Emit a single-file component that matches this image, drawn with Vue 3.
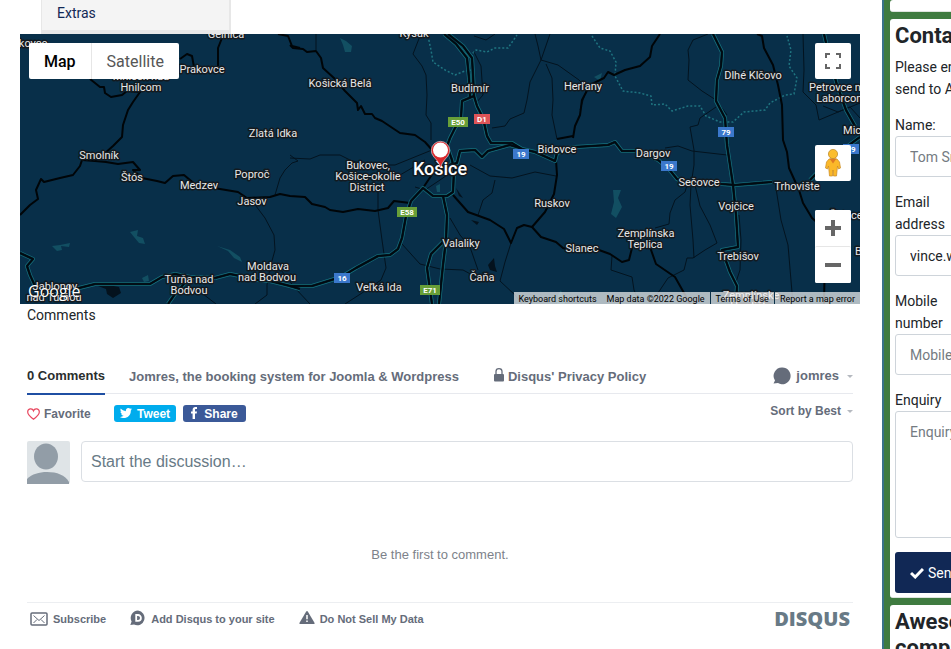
<script setup>
const places = [
  { x: 30, y: 47, t: 'okovce' },
  { x: 226, y: 38, t: 'Gelnica' },
  { x: 414, y: 37, t: 'Kysak' },
  { x: 202, y: 73, t: 'Prakovce' },
  { x: 141, y: 80, t: 'Mníšek nad' },
  { x: 141, y: 91, t: 'Hnilcom' },
  { x: 340, y: 87, t: 'Košická Belá' },
  { x: 470, y: 92, t: 'Budimír' },
  { x: 583, y: 90, t: 'Herľany' },
  { x: 753, y: 79, t: 'Dlhé Klčovo' },
  { x: 841, y: 91, t: 'Petrovce nad' },
  { x: 841, y: 102, t: 'Laborcom' },
  { x: 871, y: 134, t: 'Michalovce' },
  { x: 273, y: 137, t: 'Zlatá Idka' },
  { x: 99, y: 159, t: 'Smolník' },
  { x: 132, y: 181, t: 'Štós' },
  { x: 199, y: 189, t: 'Medzev' },
  { x: 252, y: 178, t: 'Poproč' },
  { x: 252, y: 205, t: 'Jasov' },
  { x: 368, y: 169, t: 'Bukovec,' },
  { x: 368, y: 180, t: 'Košice-okolie' },
  { x: 367, y: 191, t: 'District' },
  { x: 557, y: 153, t: 'Bidovce' },
  { x: 653, y: 157, t: 'Dargov' },
  { x: 699, y: 186, t: 'Sečovce' },
  { x: 797, y: 190, t: 'Trhovište' },
  { x: 736, y: 210, t: 'Vojčice' },
  { x: 552, y: 207, t: 'Ruskov' },
  { x: 646, y: 237, t: 'Zemplínska' },
  { x: 645, y: 248, t: 'Teplica' },
  { x: 461, y: 247, t: 'Valaliky' },
  { x: 582, y: 252, t: 'Slanec' },
  { x: 738, y: 260, t: 'Trebišov' },
  { x: 846, y: 219, t: 'Žbince' },
  { x: 873, y: 255, t: 'Budkov' },
  { x: 482, y: 281, t: 'Čaňa' },
  { x: 379, y: 291, t: 'Veľká Ida' },
  { x: 268, y: 270, t: 'Moldava' },
  { x: 267, y: 281, t: 'nad Bodvou' },
  { x: 189, y: 283, t: 'Turňa nad' },
  { x: 189, y: 294, t: 'Bodvou' },
  { x: 55, y: 290, t: 'Jablonov' },
  { x: 54, y: 301, t: 'nad Turňou' },
  { x: 751, y: 299, t: 'Zemplínske' },
  { x: 751, y: 310, t: 'Hradište' },
]

const shields = [
  { x: 458, y: 122, t: 'E50', c: '#689f38' },
  { x: 482, y: 119, t: 'D1', c: '#dc5458' },
  { x: 407, y: 212, t: 'E58', c: '#689f38' },
  { x: 430, y: 290, t: 'E71', c: '#689f38' },
  { x: 521, y: 154, t: '19', c: '#3b78cc' },
  { x: 669, y: 166, t: '19', c: '#3b78cc' },
  { x: 726, y: 132, t: '79', c: '#3b78cc' },
  { x: 342, y: 278, t: '16', c: '#3b78cc' },
  { x: 851, y: 149, t: '19', c: '#3b78cc' },
]

const highways = [
  'M448 34L463 46L472 58L473 75L474 96L462 101L461 118L455 128L450 138L447 146L452 160L454 170L453 192L447 196L433 196L423 188L411 201L406 216L402 238L398 249L390 255L378 256L356 268L341 277L312 286L290 286L270 281L258 280L240 276L230 274L215 278',
  'M444 34L456 44L467 58L469 78L470 98',
  'M474 96L477 106L483 118L487 136L491 143L512 143L522 149L535 152L555 161L557 153L575 147L608 145L615 142L622 151L640 151L658 160L668 168L677 179L690 183L722 184L735 185L772 182',
  'M449 165L457 163L460 151L475 150L482 157L488 151L510 145L520 148',
  'M443 196L447 215L446 240L443 265L439 304',
  'M443 242L431 254L427 268L432 304',
  'M215 278L190 277L175 274L162 277L150 284L95 284L75 289L60 292L35 286L30 275L27 266L33 259L20 253',
  'M190 277L175 294L168 304',
  'M713 34L722 52L721 66L717 80L716 101L725 118L727 145L730 165L733 185L736 215L738 247L722 250L730 272L737 286L736 304',
  'M824 34L830 60L837 85L846 110L855 126',
  'M810 180L825 165L845 148L860 137',
  'M290 286L300 289',
]
const thick = [
  'M290 45L293 48L303 49L307 52L316 51L321 58L323 68L335 79L345 91L357 103L358 110L361 106L365 114L372 114L375 118L382 121L400 133L415 135L425 142L433 151L440 166',
  'M278 34L288 36L292 46L300 48',
  'M90 79L100 87L104 87L105 93L111 97L122 95L127 91L140 92L133 102L128 110L123 125L122 137L113 146L104 154',
  'M180 59L187 54L192 56L194 67',
  'M222 38L218 48L218 66',
  'M82 160L80 166L73 175L60 178L44 182L41 179L36 190L38 199L30 205L20 215',
  'M82 160L95 161L106 162L118 164L133 162L140 170L133 170L142 178L157 181L165 183L173 176L184 175L196 185L220 189L238 192L247 198L270 197L280 194L290 196L305 197L312 204L325 207L330 210L343 212L358 209L375 211L388 208L394 201L410 203L423 188L435 170',
  'M453 195L468 212L490 220L504 229L511 243L517 228L524 225L532 227L545 212L554 194L557 175L556 160',
  'M532 227L541 237L556 242L563 248L578 252',
  'M599 250L610 254L622 262L629 260L632 248L634 237',
  'M650 247L656 264L675 277L688 300L690 304',
  'M573 138L575 126L580 115L582 100L590 85L604 78L608 72L614 75L625 70L640 66L650 57L652 46L660 34',
  'M557 139L573 136',
  'M757 34L762 36L764 48L773 65L778 85L782 105L783 140L787 152L789 168L799 190L803 203L812 218L820 225L825 250L824 304',
]
const thin = [
  'M420 36L413 54L422 66L426 75L427 95L426 115L431 123L431 140',
  'M535 34L538 46L541 60L530 82L527 100L524 113L510 119L505 126L492 128',
  'M550 34L541 60L558 65L579 80L587 88L580 110',
  'M546 64L552 78L553 100L552 115L557 139',
  'M474 52L481 66L483 95L476 103',
  'M474 36L486 40L495 34',
  'M708 34L693 40L688 50L689 60L688 80L702 91L716 100L727 115',
  'M716 107L700 118L698 125L690 127L694 150L694 165L691 185L690 205L693 240L694 258',
  'M665 148L678 146L692 151L727 155',
  'M695 185L700 206L710 225L717 243L705 250L693 258L687 258L684 270L668 278L660 290L650 304',
  'M687 185L685 192L675 200L670 213L669 224L655 228',
  'M612 256L611 270L632 277L634 290L640 304',
  'M803 34L804 70L803 92L816 105L819 120L850 107L860 118',
  'M775 182L781 220L788 245L793 304',
  'M823 106L838 112L860 103',
  'M253 202L265 218L274 235L275 250L270 268L267 285L267 295L255 304',
  'M275 195L280 178L285 170L292 163L298 161L290 155M290 158L310 159L320 155L340 155L350 160L365 165L395 165L432 150',
  'M281 270L295 288L310 304',
  'M378 190L378 210L382 240L386 268L381 280L362 293L345 304',
  'M402 244L420 264L440 269L463 270L476 277',
  'M450 218L460 235L470 247L478 270',
  'M511 243L505 262L500 281L515 295L522 304',
  'M470 165L490 176L512 178L535 172L556 176M495 180L492 193L483 200L478 215',
  'M316 34L316 50M400 175L412 168L425 160M415 187L425 190L440 180L453 171',
  'M739 215L741 240L740 270L735 285',
  'M203 294L216 304',
]
const dotted = [
  'M428 36L431 50L433 62L445 70L455 75L465 71L473 70L472 54L476 50L487 52L495 48L508 48L517 35',
  'M592 36L600 48L610 51L616 62L615 76L623 91L640 93L651 96L652 105L665 104L672 111L688 106L700 106L706 116L720 122L733 122L744 112L765 110L770 103L785 95L794 94L797 78L789 66L791 50L787 36',
]
const lakes = [
  'M340 38L346 41L352 46L351 52L345 52L343 45Z',
  'M613 190H621L618 198L622 207L616 218L611 214L614 202Z',
  'M52 246L60 245L70 243L69 247L61 246L62 250L57 251Z',
  'M130 232L138 230L137 236L143 238L145 244L139 243L134 237Z',
  'M217 246L230 250L240 257L242 262L234 258L228 251Z',
  'M142 278L148 275L149 281L144 282Z',
  'M594 77L602 73L600 81Z',
  'M436 186L440 184L440 192L437 192Z',
  'M558 295L561 290L565 304H557Z',
]
const quarries = [
  'M98 286L108 285L119 287L121 293L113 298L107 294L106 289Z',
  'M488 265L494 258L495 266L497 272L490 270Z',
  'M471 220L479 222L477 225Z',
  'M456 188L463 198L459 196Z',
]
</script>

<template>
  <div class="page">
    <main class="main">
      <nav class="dropdown"><a href="#">Extras</a></nav>

      <section class="map" aria-label="Map">
        <svg class="canvas" viewBox="20 34 840 270" preserveAspectRatio="xMidYMid slice">
          <rect x="20" y="34" width="840" height="270" fill="#082f49" />
          <g fill="#124f62"><path v-for="d in lakes" :key="d" :d="d" /></g>
          <g fill="#04121d"><path v-for="d in quarries" :key="d" :d="d" /></g>
          <g class="line" stroke="#1f7480" stroke-width="1.500" stroke-dasharray="2 2"><path v-for="d in dotted" :key="d" :d="d" /></g>
          <g class="line" stroke="#03131f" stroke-width="1"><path v-for="d in thin" :key="d" :d="d" /></g>
          <g class="line" stroke="#000508" stroke-width="2"><path v-for="d in thick" :key="d" :d="d" /></g>
          <g class="line" stroke="#15717d" stroke-width="4"><path v-for="d in highways" :key="d" :d="d" /></g>
          <g class="line" stroke="#041c2b" stroke-width="2.600"><path v-for="d in highways" :key="d" :d="d" /></g>
          <g class="line" stroke="#000a10" stroke-width="1.600"><path v-for="d in highways" :key="d" :d="d" /></g>
          <g v-for="s in shields" :key="s.t + s.x">
            <rect :x="s.x - (s.t.length > 2 ? 10 : 8)" :y="s.y - 5" :width="s.t.length > 2 ? 20 : 16" height="10" :fill="s.c" />
            <text class="shield" :x="s.x" :y="s.y + 3">{{ s.t }}</text>
          </g>
          <text v-for="p in places" :key="p.t" class="place" :x="p.x" :y="p.y">{{ p.t }}</text>
          <text class="place city" x="440" y="175">Košice</text>
          <path d="M440.500 168C439 162 436 159.500 433.500 156.500A9.200 9.200 0 1 1 447.500 156.500C445 159.500 442 162 440.500 168Z" fill="#d8282c" stroke="#fff" stroke-width=".5" />
          <circle cx="440.500" cy="150" r="7.500" fill="#fff" />
        </svg>

        <div class="map-type">
          <button class="on" type="button">Map</button>
          <button type="button">Satellite</button>
        </div>
        <div class="controls">
          <button class="ctl" type="button" aria-label="Toggle fullscreen view">
            <svg width="16" height="16" viewBox="0 0 16 16"><path d="M1 5V1H5M11 1H15V5M15 11V15H11M5 15H1V11" fill="none" stroke="#666" stroke-width="2" /></svg>
          </button>
          <button class="ctl pegman" type="button" aria-label="Street View">
            <svg width="18" height="30" viewBox="0 0 18 30">
              <path d="M5 11L2.500 14L1.500 20L3.500 21L4.500 18L5.500 28H8.500L9 22L9.500 28H12.500L13.500 18L14.500 21L16.500 20L15.500 14L13 11Z" fill="#fbb829" stroke="#c98a22" stroke-width=".7" />
              <path d="M5.500 10.500H12.500L9 15.500Z" fill="#e07a24" />
              <circle cx="9" cy="6" r="4.600" fill="#fbbd2e" stroke="#b98524" stroke-width=".7" />
            </svg>
          </button>
          <div class="zoom">
            <button type="button" aria-label="Zoom in"><svg width="16" height="16" viewBox="0 0 16 16"><path d="M0 8H16M8 0V16" stroke="#666" stroke-width="4" /></svg></button>
            <button type="button" aria-label="Zoom out"><svg width="16" height="16" viewBox="0 0 16 16"><path d="M0 8H16" stroke="#666" stroke-width="4" /></svg></button>
          </div>
        </div>
        <span class="google">Google</span>
        <div class="legal">
          <button type="button">Keyboard shortcuts</button>
          <span>Map data ©2022 Google</span>
          <a href="#">Terms of Use</a>
          <a href="#">Report a map error</a>
        </div>
      </section>

      <section class="comments">
        <h2>Comments</h2>
        <div class="disqus">
          <div class="tabs">
            <a class="tab current" href="#">0 Comments</a>
            <a class="tab site" href="#">Jomres, the booking system for Joomla &amp; Wordpress</a>
            <a class="tab" href="#">
              <svg width="10" height="18" viewBox="0 0 10 18"><rect y="6" width="10" height="7.500" rx="1" fill="#656c7a" /><path d="M2 6V3.500A3 2.800 0 0 1 8 3.500V6" fill="none" stroke="#656c7a" stroke-width="1.300" /></svg>
              Disqus' Privacy Policy
            </a>
            <button class="user" type="button">
              <svg width="18" height="18" viewBox="0 0 18 18"><path d="M9.300 .5A8.200 8.400 0 1 1 5 16L.5 16.500L2 13.500A8.300 8.400 0 0 1 9.300 .5Z" fill="#656c7a" /></svg>
              jomres
              <i class="caret"></i>
            </button>
          </div>

          <div class="actions">
            <button class="favorite" type="button">
              <svg width="13" height="12" viewBox="0 0 13 12"><path d="M6.500 11.200C3 8.600 .7 6.700 .7 4A3 3.100 0 0 1 6.500 2.800A3 3.100 0 0 1 12.300 4C12.300 6.700 10 8.600 6.500 11.200Z" fill="none" stroke="#e8475f" stroke-width="1.200" /></svg>
              Favorite
            </button>
            <button class="share tweet" type="button">
              <svg width="12" height="12" viewBox="0 0 12 12"><path d="M12 1.200L10.800 2.400C11 7 7.500 10 3.800 10C2.400 10 1 9.600 0 8.900C1.300 9 2.600 8.600 3.600 7.800C2.500 7.700 1.600 7 1.300 6.100H2.400C1.200 5.800 .4 4.700 .4 3.600L1.500 3.900C.4 3.100 .1 1.700 .8 .6C2 2.100 3.800 3.100 5.900 3.200C5.500 1.300 6.800 0 8.300 0C9 0 9.700 .3 10.100 .8L11.700 .2L10.700 1.500Z" fill="#fff" /></svg>
              Tweet
            </button>
            <button class="share facebook" type="button">
              <svg width="6" height="14" viewBox="0 0 6 14"><path d="M1.600 12V6.600H0V4.500H1.600V3C1.600 1 2.700 0 4.400 0H6V2.100H4.900C4.200 2.100 4 2.500 4 3.100V4.500H6L5.700 6.600H4V12Z" fill="#fff" /></svg>
              Share
            </button>
            <button class="sort" type="button">Sort by Best <i class="caret"></i></button>
          </div>

          <div class="composer">
            <svg class="avatar" width="43" height="43" viewBox="0 0 43 43"><rect width="43" height="43" rx="2" fill="#dfe4e7" /><ellipse cx="19" cy="15.500" rx="12" ry="13" fill="#929da7" /><path d="M0 38C5 33 12 31 20 31C30 31 38 34 42 41V43H0Z" fill="#929da7" /></svg>
            <input type="text" placeholder="Start the discussion…" aria-label="Start the discussion" />
          </div>

          <p class="empty">Be the first to comment.</p>

          <footer class="foot">
            <a href="#">
              <svg width="18" height="14" viewBox="0 0 18 14"><rect x="1" y="1" width="16" height="12" rx="1" fill="none" stroke="#656c7a" stroke-width="1.500" /><path d="M3.500 3.500L9 8.500L14.500 3.500M3.500 11L7 7.500M14.500 11L11 7.500" fill="none" stroke="#656c7a" /></svg>
              Subscribe
            </a>
            <a href="#">
              <svg width="16" height="18" viewBox="0 0 16 18"><path d="M8 .5A7.300 7.400 0 1 1 4 14.500L.3 15L1.600 11.500A7.300 7.400 0 0 1 8 .5Z" fill="#656c7a" /><path d="M6.200 5H8A2.900 2.900 0 0 1 8 10.800H6.200Z" fill="none" stroke="#fff" stroke-width="1.800" /></svg>
              Add Disqus to your site
            </a>
            <a href="#">
              <svg width="16" height="18" viewBox="0 0 16 18"><path d="M7.200 1.600Q8 .6 8.800 1.600L15.600 13Q15.800 14 15 14H1Q.2 14 .4 13Z" fill="#656c7a" /><path d="M8 5V9.300M8 10.500V12" stroke="#fff" stroke-width="1.500" /></svg>
              Do Not Sell My Data
            </a>
            <a class="brand" href="#">DISQUS</a>
          </footer>
        </div>
      </section>
    </main>

    <aside class="side">
      <div class="card stub"></div>
      <form class="card contact" @submit.prevent>
        <h3>Contact</h3>
        <p>Please enter<br />send to A</p>
        <div class="field">
          <label for="name">Name:</label>
          <input id="name" type="text" placeholder="Tom Smith" />
        </div>
        <div class="field">
          <label for="email">Email<br />address</label>
          <input id="email" type="text" value="vince.w" />
        </div>
        <div class="field">
          <label for="mobile">Mobile<br />number</label>
          <input id="mobile" type="text" placeholder="Mobile" />
        </div>
        <div class="field">
          <label for="enquiry">Enquiry</label>
          <textarea id="enquiry" placeholder="Enquiry"></textarea>
        </div>
        <button class="send" type="submit">
          <svg width="14" height="12" viewBox="0 0 14 12"><path d="M1 6L5.200 10L13 2" fill="none" stroke="#fff" stroke-width="3" /></svg>
          Send
        </button>
      </form>
      <div class="card last"><h3>Awesome<br />company</h3></div>
    </aside>
  </div>
</template>

<style>
body { margin: 0; background: #fff; }
</style>

<style scoped>
* { box-sizing: border-box; }
button { margin: 0; padding: 0; border: 0; background: none; font: inherit; color: inherit; }
a { color: inherit; text-decoration: none; }
svg { display: block; flex: none; }
.page {
  display: grid;
  grid-template-columns: minmax(0, 1fr) 69px;
  height: 100vh;
  overflow: hidden;
  font: 14px/22px Roboto, sans-serif;
  color: #212529;
}
.main { padding: 0 22px 0 20px; }
.dropdown {
  width: 190px;
  height: 34px;
  margin-left: 21px;
  padding: 2px 15px;
  background: #f4f4f4;
  border: solid #e7e7e7;
  border-width: 0 2px 4px 1px;
  color: #112855;
}

.map { position: relative; height: 270px; overflow: hidden; }
.canvas { width: 100%; height: 100%; }
.line { fill: none; stroke-linejoin: round; }
.place {
  font: 11px Roboto, sans-serif;
  fill: #e8e8e8;
  stroke: #131a20;
  stroke-width: 3px;
  stroke-linejoin: round;
  paint-order: stroke;
  text-anchor: middle;
}
.city { font-size: 18px; font-weight: 500; fill: #fff; }
.shield { font: bold 8px Roboto, sans-serif; fill: #fff; text-anchor: middle; }
.map-type {
  position: absolute;
  top: 9px;
  left: 9px;
  display: flex;
  height: 36px;
  background: #fff;
  border-radius: 2px;
  font-size: 16px;
  line-height: 38px;
  color: #565656;
}
.map-type button { padding: 0 15px; }
.map-type .on { color: #000; font-weight: 500; border-right: 1px solid #e6e6e6; }
.controls { position: absolute; top: 9px; right: 9px; width: 36px; }
.ctl, .zoom button { display: grid; place-items: center; width: 36px; height: 36px; background: #fff; border-radius: 2px; }
.pegman { margin-top: 66px; }
.zoom { margin-top: 29px; background: #fff; border-radius: 2px; }
.zoom button + button { border-top: 1px solid #e6e6e6; height: 37px; }
.google {
  position: absolute;
  left: 8px;
  bottom: 3px;
  font: 500 16px/20px "Open Sans", sans-serif;
  color: #fff;
  text-shadow: 0 0 1px #000;
}
.legal {
  position: absolute;
  right: 0;
  bottom: 0;
  display: flex;
  height: 12px;
  font-size: 9px;
  line-height: 14px;
  color: #000;
}
.legal > * { padding: 0 5px; background: rgba(245, 245, 245, .7); white-space: nowrap; }
.legal button { padding: 0 5px 0 4px; }
.legal a { border-left: 1px solid #0b3149; background-clip: padding-box; }

.comments { padding: 0 7px; }
h2 { margin: 0; font: inherit; }
.disqus { font-family: "Liberation Sans", Arial, sans-serif; color: #656c7a; }
.disqus button, .foot a { display: flex; align-items: center; font-weight: bold; }
.tabs {
  display: flex;
  height: 36px;
  margin-top: 32px;
  border-bottom: 1px solid #e7e9ee;
  font-size: 13px;
  font-weight: bold;
  line-height: 36px;
  white-space: nowrap;
}
.tab { display: flex; align-items: center; gap: 4px; height: 37px; }
.current { margin-right: 24px; color: #2a2e2e; border-bottom: 2px solid #1f4fa3; }
.site { margin-right: 35px; }
.tabs .user { gap: 5px; margin-left: auto; height: 36px; }
.caret { border: solid transparent; border-width: 3px 3px 0; border-top-color: #b5b9c0; margin-left: 3px; }
.actions { display: flex; align-items: center; height: 17px; margin-top: 11px; font-size: 12px; }
.favorite { gap: 4px; width: 87px; }
.disqus .share { justify-content: center; height: 17px; border-radius: 3px; color: #fff; gap: 5px; font-size: 12px; padding-top: 1px; }
.disqus .tweet { width: 62px; background: #00aced; margin-right: 7px; }
.disqus .facebook { width: 63px; background: #3b5998; gap: 7px; }
.actions .sort { align-self: flex-start; height: 12px; margin-left: auto; gap: 3px; }
.composer { display: flex; gap: 11px; margin-top: 19px; }
.composer input {
  flex: 1;
  min-width: 0;
  height: 41px;
  padding: 0 9px;
  border: 1px solid #dbdfe4;
  border-radius: 4px;
  font: 16px "Liberation Sans", Arial, sans-serif;
}
.composer input::placeholder { color: #687a86; opacity: 1; }
.empty { margin: 60px 0 0; text-align: center; font-size: 13px; color: #7d828a; }
.foot {
  display: flex;
  align-items: center;
  height: 32px;
  margin-top: 36px;
  padding: 0 3px;
  border-top: 1px solid #eceef1;
  font-size: 11px;
  gap: 24px;
}
.foot a { gap: 5px; height: 30px; }
.foot .brand { margin-left: auto; font: 800 20px/30px "Open Sans", sans-serif; color: #687a86; }

.side {
  display: grid;
  align-content: start;
  gap: 7px;
  padding-left: 6px;
  overflow: hidden;
  background: #3f7b40;
  border-left: 2px solid #39728a;
}
.card { width: 280px; padding: 4px 5px; background: #fff; border: 1px solid #dfe5df; border-width: 0 0 1px; border-radius: 3px; }
.stub { height: 12px; }
h3 { margin: 0; font-size: 22px; font-weight: 700; line-height: 26px; }
.contact p { margin: 7px 0 14px; }
.field { margin-bottom: 14px; }
.field label { display: block; }
.field input, .field textarea {
  display: block;
  width: 100%;
  height: 41px;
  padding: 0 14px;
  border: 1px solid #ced4da;
  border-radius: 3px;
  background: #fff;
  color: #212529;
  font: 14px/22px Roboto, sans-serif;
}
.field textarea { height: 127px; padding: 9px 14px; resize: none; }
.field ::placeholder { color: #747b82; opacity: 1; }
.contact .send { display: flex; align-items: center; gap: 4px; width: 100%; height: 41px; padding: 0 15px; border-radius: 3px; background: #112855; color: #fff; }
</style>
